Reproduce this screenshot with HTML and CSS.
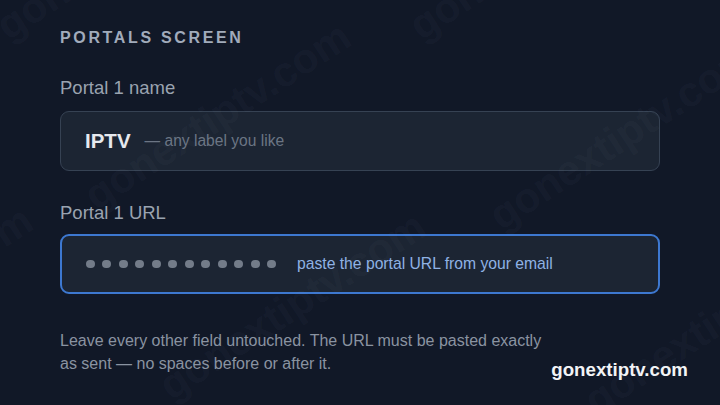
FILE: index.html
```html
<!DOCTYPE html>
<html lang="en">
<head>
<meta charset="utf-8">
<title>Portals screen</title>
<link rel="stylesheet" href="styles.css">
</head>
<body>
<main class="screen">
  <h1 class="section-title">PORTALS SCREEN</h1>

  <div class="field field-name">
    <div class="field-label">Portal 1 name</div>
    <div class="input">
      <span class="value">IPTV</span>
      <span class="hint">— any label you like</span>
    </div>
  </div>

  <div class="field field-url">
    <div class="field-label">Portal 1 URL</div>
    <div class="input input-focus">
      <span class="dots">
        <i></i><i></i><i></i><i></i><i></i><i></i><i></i><i></i><i></i><i></i><i></i><i></i>
      </span>
      <span class="hint-blue">paste the portal URL from your email</span>
    </div>
  </div>

  <p class="note">Leave every other field untouched. The URL must be pasted exactly<br>as sent — no spaces before or after it.</p>

  <div class="brand">gonextiptv.com</div>

  <div class="watermarks" aria-hidden="true">
    <span class="wm wm1">gonextiptv.com</span>
    <span class="wm wm2">gonextiptv.com</span>
    <span class="wm wm3">gonextiptv.com</span>
    <span class="wm wm4">gonextiptv.com</span>
    <span class="wm wm5">gonextiptv.com</span>
    <span class="wm wm6">gonextiptv.com</span>
    <span class="wm wm7">gonextiptv.com</span>
  </div>
</main>
</body>
</html>
```
FILE: styles.css
```css
html, body {
  margin: 0;
  padding: 0;
  background: #111827;
}

.screen {
  position: relative;
  width: 720px;
  height: 405px;
  box-sizing: border-box;
  padding: 28px 60px 0 60px;
  overflow: hidden;
  font-family: "Liberation Sans", Arial, sans-serif;
  background: #111827;
}

.section-title {
  margin: 0;
  font-size: 16px;
  line-height: 20px;
  font-weight: 700;
  letter-spacing: 2.65px;
  color: #a1abbb;
}

.field-label {
  font-size: 18.5px;
  line-height: 22px;
  color: #9aa3b0;
}

.field-name {
  margin-top: 29px;
}

.field-url {
  margin-top: 31px;
}

.field-name .field-label {
  margin-bottom: 12px;
}

.field-url .field-label {
  margin-bottom: 10px;
}

.input {
  box-sizing: border-box;
  height: 60px;
  display: flex;
  align-items: center;
  padding: 0 24px;
  background: #1c2533;
  border: 1px solid #364253;
  border-radius: 9px;
}

.value {
  font-size: 20.5px;
  font-weight: 700;
  color: #e6e9ee;
}

.hint {
  margin-left: 14px;
  font-size: 15.6px;
  color: #6b7584;
}

.input-focus {
  border: 2px solid #3d78d0;
  padding-left: 24px;
}

.dots {
  display: flex;
  gap: 7.8px;
}

.dots i {
  display: block;
  width: 8.7px;
  height: 8.7px;
  border-radius: 50%;
  background: #737c89;
}

.hint-blue {
  margin-left: 21px;
  font-size: 15.7px;
  color: #8fb2e4;
}

.note {
  margin: 36px 0 0 0;
  font-size: 16px;
  line-height: 22.5px;
  color: #8a93a1;
}

.brand {
  position: absolute;
  right: 32px;
  bottom: 24px;
  font-size: 18.7px;
  font-weight: 700;
  color: #f3f4f6;
}

.watermarks {
  position: absolute;
  inset: 0;
  pointer-events: none;
  overflow: hidden;
}

.wm {
  position: absolute;
  font-family: "Liberation Sans", Arial, sans-serif;
  font-size: 42px;
  font-weight: 700;
  line-height: 1;
  white-space: nowrap;
  color: rgba(160, 175, 200, 0.05);
  transform: rotate(-33deg);
  transform-origin: 0 100%;
}

.wm1 { left: 12px;   top: 5px; }
.wm2 { left: 100px;  top: 175px; }
.wm3 { left: 425px;  top: 5px; }
.wm4 { left: 505px;  top: 195px; }
.wm5 { left: -218px; top: 359px; }
.wm6 { left: 175px;  top: 365px; }
.wm7 { left: 600px;  top: 380px; }
```
